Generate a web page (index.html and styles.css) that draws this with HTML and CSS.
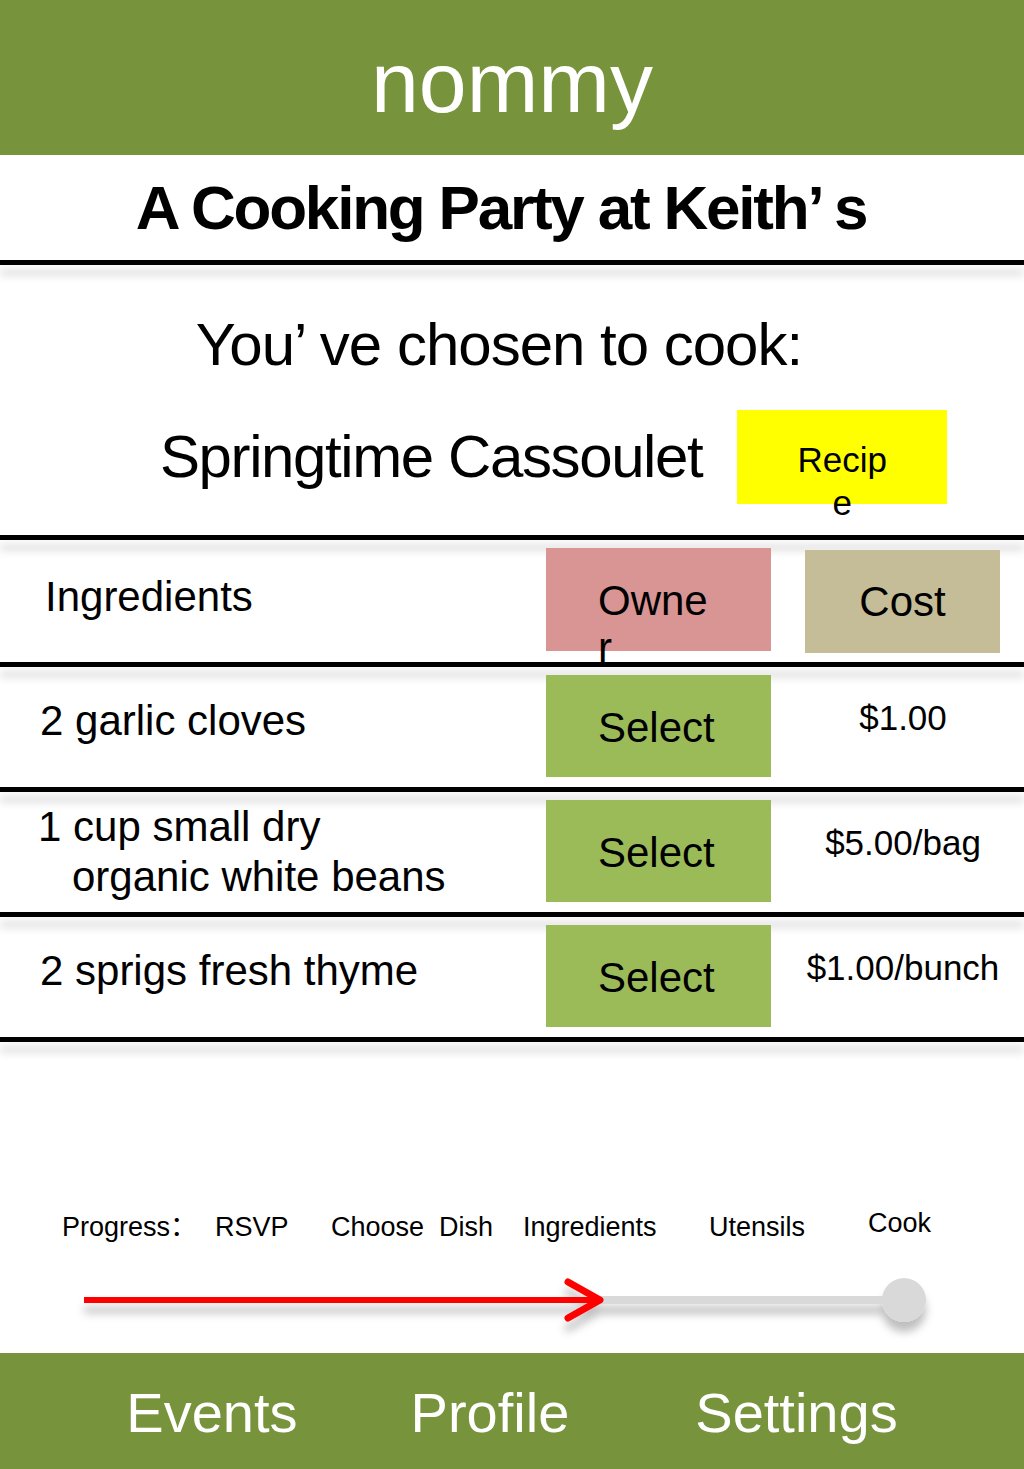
FILE: index.html
```html
<!DOCTYPE html>
<html lang="en">
<head>
    <meta charset="UTF-8">
    <meta name="viewport" content="width=device-width, initial-scale=1.0">
    <title>nommy - Springtime Cassoulet</title>
    <link rel="stylesheet" href="styles.css">
</head>
<body>
    <div class="screen">
        <header class="topbar">nommy</header>
        <h1 class="party-title">A Cooking Party at Keith’ s</h1>
        <div class="rule"></div>

        <section class="chosen">
            <p class="chosen-label">You’ ve chosen to cook:</p>
            <div class="dish-row">
                <span class="dish-name">Springtime Cassoulet</span>
                <div class="recipe-btn">Recipe</div>
            </div>
        </section>
        <div class="rule"></div>

        <div class="ing-row ing-head">
            <div class="ing-name">Ingredients</div>
            <div><div class="tag tag-owner">Owner</div></div>
            <div class="cost-cell"><div class="tag tag-cost">Cost</div></div>
        </div>
        <div class="rule"></div>

        <div class="ing-row">
            <div class="ing-name">2 garlic cloves</div>
            <div><div class="tag tag-select">Select</div></div>
            <div class="cost-cell"><div class="price">$1.00</div></div>
        </div>
        <div class="rule"></div>

        <div class="ing-row">
            <div class="ing-name ing-long">1 cup small dry<br>organic white beans</div>
            <div><div class="tag tag-select">Select</div></div>
            <div class="cost-cell"><div class="price">$5.00/bag</div></div>
        </div>
        <div class="rule"></div>

        <div class="ing-row">
            <div class="ing-name">2 sprigs fresh thyme</div>
            <div><div class="tag tag-select">Select</div></div>
            <div class="cost-cell"><div class="price">$1.00/bunch</div></div>
        </div>
        <div class="rule"></div>

        <section class="progress">
            <div class="steps">
                <span>Progress：</span>
                <span>RSVP</span>
                <span>Choose&nbsp; Dish</span>
                <span>Ingredients</span>
                <span>Utensils</span>
                <span class="step-last">Cook</span>
            </div>
            <svg class="track" width="1024" height="112" viewBox="0 0 1024 112">
                <defs>
                    <filter id="soft" x="-10%" y="-100%" width="120%" height="400%">
                        <feDropShadow dx="0" dy="10" stdDeviation="4" flood-color="#000" flood-opacity="0.25"/>
                    </filter>
                </defs>
                <g filter="url(#soft)">
                    <line x1="598" y1="59" x2="904" y2="59" stroke="#d9d9d9" stroke-width="8"/>
                    <circle cx="904" cy="59" r="22" fill="#d9d9d9"/>
                    <line x1="84" y1="59" x2="598" y2="59" stroke="#ff0000" stroke-width="6"/>
                    <polyline points="568,41 600,59 568,77" fill="none" stroke="#ff0000" stroke-width="7" stroke-linecap="round" stroke-linejoin="round"/>
                </g>
            </svg>
        </section>

        <nav class="bottombar">
            <span>Events</span>
            <span>Profile</span>
            <span class="nav-last">Settings</span>
        </nav>
    </div>
</body>
</html>
```

FILE: styles.css
```css
* {
    margin: 0;
    padding: 0;
    box-sizing: border-box;
}

body {
    font-family: "Liberation Sans", Arial, "Noto Sans CJK SC", sans-serif;
    background: #fff;
    color: #000;
}

.screen {
    width: 1024px;
    height: 1469px;
    display: flex;
    flex-direction: column;
    overflow: hidden;
}

.topbar {
    height: 155px;
    padding-top: 39px;
    background: #77933c;
    color: #fff;
    font-size: 86px;
    line-height: 86px;
    text-align: center;
}

.party-title {
    height: 105px;
    padding: 22px 22px 0 0;
    font-size: 62px;
    line-height: 62px;
    font-weight: bold;
    letter-spacing: -2.2px;
    text-align: center;
}

.rule {
    height: 5px;
    background: #000;
    box-shadow: 0 10px 9px rgba(0, 0, 0, 0.17);
    flex-shrink: 0;
}

.chosen {
    height: 270px;
    padding-top: 50px;
}

.chosen-label {
    font-size: 60px;
    line-height: 60px;
    letter-spacing: -1px;
    text-align: center;
    padding-right: 26px;
}

.dish-row {
    display: flex;
    align-items: center;
    gap: 35px;
    margin-top: 35px;
    padding-left: 160px;
}

.dish-name {
    font-size: 60px;
    line-height: 60px;
    letter-spacing: -1.4px;
}

.recipe-btn {
    width: 210px;
    height: 94px;
    padding: 28px 55px 0;
    background: #ffff00;
    font-size: 35px;
    line-height: 43px;
    text-align: center;
    word-break: break-all;
}

.ing-row {
    display: grid;
    grid-template-columns: 546px 225px 1fr;
    height: 120px;
}

.ing-head {
    height: 122px;
}

.ing-name {
    padding: 33px 0 0 40px;
    font-size: 42px;
    line-height: 42px;
}

.ing-head .ing-name {
    padding: 36px 0 0 45px;
}

.ing-long {
    padding: 10px 0 0 72px;
    text-indent: -34px;
    line-height: 50px;
}

.tag {
    height: 102px;
    margin-top: 8px;
    padding: 29px 52px 0;
    font-size: 42px;
    line-height: 47px;
    word-break: break-all;
}

.tag-owner {
    background: #d99594;
    height: 103px;
}

.tag-select {
    background: #9bbb59;
}

.cost-cell {
    padding-left: 34px;
}

.tag-cost {
    width: 195px;
    height: 103px;
    margin-top: 10px;
    padding: 0;
    background: #c4bd97;
    display: flex;
    align-items: center;
    justify-content: center;
}

.price {
    width: 196px;
    padding-top: 33px;
    font-size: 35px;
    line-height: 35px;
    text-align: center;
}

.progress {
    margin-top: auto;
}

.steps {
    display: grid;
    grid-template-columns: 153px 116px 192px 186px 159px auto;
    align-items: start;
    padding-left: 62px;
    font-size: 27px;
    line-height: 27px;
}

.step-last {
    margin-top: -4px;
}

.track {
    display: block;
}

.bottombar {
    height: 116px;
    background: #77933c;
    color: #fff;
    display: flex;
    justify-content: center;
    align-items: center;
    gap: 113px;
    padding-top: 4px;
    font-size: 56px;
    line-height: 56px;
}

.nav-last {
    margin-left: 13px;
}
```
